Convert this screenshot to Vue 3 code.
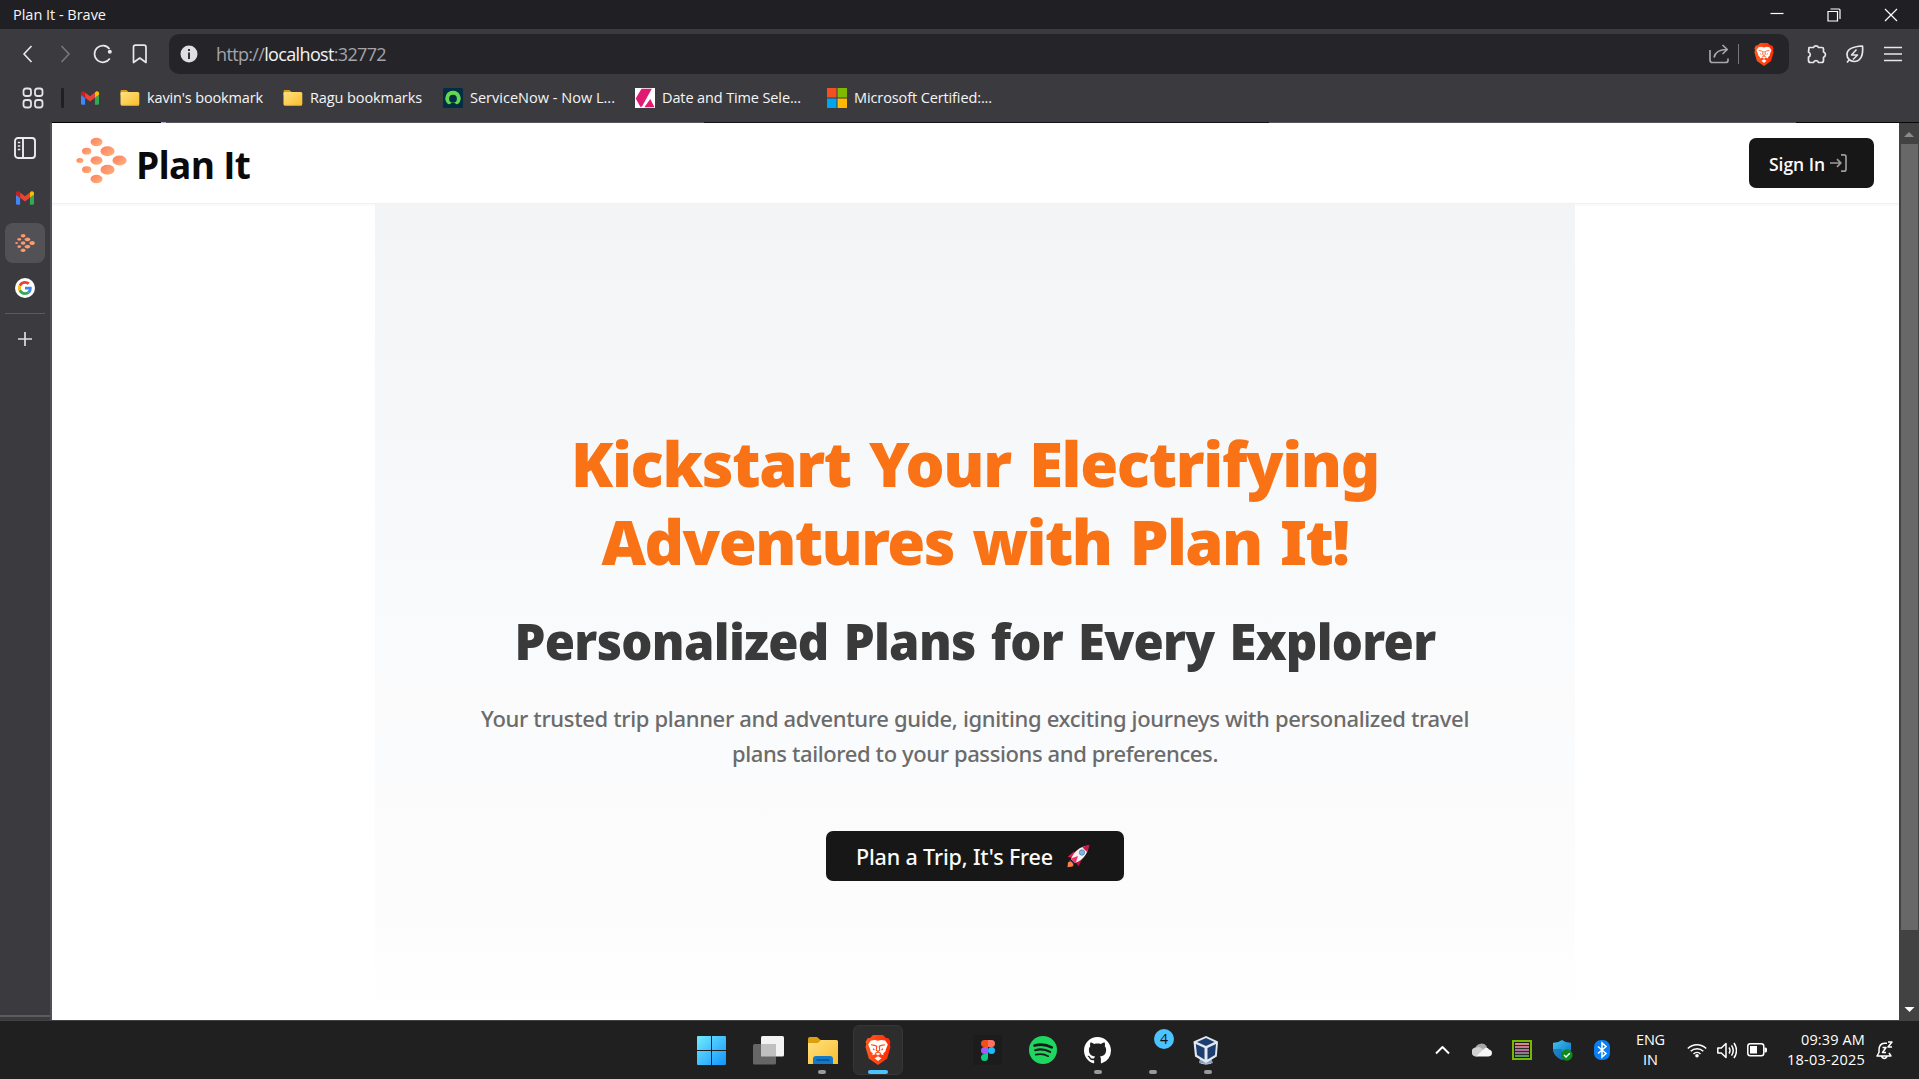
<script setup>
// Spreads the letters of a label so that it takes up the given width.
const vFit = {
  mounted(el, { value }) {
    const n = el.textContent.length
    const w = el.getBoundingClientRect().width
    el.style.letterSpacing = `${(value - w) / n}px`
  },
}

const dots = [
  [96, 142, 6, 4.2], [86.2, 151.2, 4.7, 3.4], [107, 151.2, 7, 5],
  [79.4, 160.5, 3.5, 2.5], [96, 160.5, 6, 4.2], [119, 160.5, 7, 5],
  [86.2, 169.7, 4.7, 3.4], [107, 169.7, 7, 5], [96, 179, 6, 4.2],
]

const bookmarks = [
  { icon: 'i-folder', text: "kavin's bookmark", w: 116, gap: 20 },
  { icon: 'i-folder', text: 'Ragu bookmarks', w: 112, gap: 21 },
  { icon: 'i-now', text: 'ServiceNow - Now L...', w: 145, gap: 20 },
  { icon: 'i-pick', text: 'Date and Time Sele...', w: 139, gap: 26 },
  { icon: 'i-ms', text: 'Microsoft Certified:...', w: 138, gap: 0 },
]
</script>

<template>
  <div class="screen">
    <svg class="defs" width="0" height="0">
      <defs>
        <linearGradient id="gl" x1="0" y1="0" x2="1" y2="1"><stop offset="0" stop-color="#ff7e5f" /><stop offset="1" stop-color="#feb47b" /></linearGradient>
        <linearGradient id="gf" x1="0" y1="0" x2="1" y2="1"><stop offset="0" stop-color="#ffe182" /><stop offset="1" stop-color="#f9bd2b" /></linearGradient>
        <linearGradient id="gw" x1="0" y1="0" x2="29" y2="29" gradientUnits="userSpaceOnUse"><stop offset="0" stop-color="#72ebff" /><stop offset="1" stop-color="#1294fb" /></linearGradient>
        <linearGradient id="gs" x1="0" y1="0" x2="1" y2="1"><stop offset="0" stop-color="#3dc6f2" /><stop offset="1" stop-color="#0c67c0" /></linearGradient>
        <linearGradient id="gb" x1="0" y1="0" x2="1" y2="0"><stop offset="0" stop-color="#ff5a1f" /><stop offset="1" stop-color="#ff2a00" /></linearGradient>
        <linearGradient id="gn" x1="0" y1="0" x2="0" y2="1"><stop offset="0" stop-color="#e0907c" /><stop offset=".5" stop-color="#b76aa4" /><stop offset="1" stop-color="#4f9d6a" /></linearGradient>
      </defs>
      <symbol id="i-gmail" viewBox="52 42 88 66">
        <path fill="#4285f4" d="M58 108h14V74L52 59v43c0 3.32 2.69 6 6 6" /><path fill="#34a853" d="M120 108h14c3.32 0 6-2.69 6-6V59l-20 15" />
        <path fill="#fbbc04" d="M120 48v26l20-15v-8c0-7.42-8.47-11.65-14.4-7.2" /><path fill="#ea4335" d="M72 74V48l24 18 24-18v26L96 92" />
        <path fill="#c5221f" d="M52 51v8l20 15V48l-5.6-4.2c-5.94-4.45-14.4-.22-14.4 7.2" />
      </symbol>
      <symbol id="i-logo" viewBox="75.5 137 51 47">
        <ellipse v-for="(d, i) in dots" :key="i" :cx="d[0]" :cy="d[1]" :rx="d[2]" :ry="d[3]" fill="url(#gl)" />
      </symbol>
      <symbol id="i-brave" viewBox="0 0 26 30">
        <path fill="url(#gb)" d="M8 0h10l3 3 2.500.3L25.500 7l-.8 2 .8 3-3.300 11.500L13 30 3.800 23.500.500 12l.8-3L.500 7l2-3.700L5 3z" />
        <path fill="#fff" d="M13 5.800l3-.9 4.200.6 2.600 4-2 5-.3 1.800-2.300 2.300.4 1.700-3.300-1.200L13 20.500l-2.300-1.400-3.300 1.200.4-1.700-2.300-2.300-.3-1.800-2-5 2.600-4L10 4.900zM13 21.300l3.400 2L13 26l-3.400-2.700z" />
        <path fill="none" stroke="#fb4a13" stroke-width="1.100" d="M6 9.800l3.700.6 1.500.9M20 9.800l-3.700.6-1.500.9M11.800 10.500l-.5 4.700 1.700 1.300 1.700-1.300-.5-4.700M8 13.800l1.500 1.200M18 13.800l-1.500 1.200M10 18.500l3-1.500 3 1.500" />
      </symbol>
      <symbol id="i-folder" viewBox="0 0 20 20"><path fill="#d99c1c" d="M.5 3.500c0-1 .5-1.500 1.500-1.500h4.500l2 2H18v3H.5z" /><rect x=".5" y="4" width="18.800" height="13.600" rx="1.500" fill="url(#gf)" /><path stroke="#e0a01f" d="M1.500 17.400h17" /></symbol>
      <symbol id="i-now" viewBox="0 0 20 20"><rect width="20" height="20" rx="1.500" fill="#032d42" /><path fill="#62d84e" d="M10 2.800a7.500 7.500 0 0 0-5.300 12.900c.6.600 1.400.6 2.100.2a5.700 5.700 0 0 1 6.400 0c.7.400 1.500.4 2.100-.2A7.500 7.500 0 0 0 10 2.800zm0 4a3.900 3.900 0 1 1 0 7.800 3.900 3.900 0 0 1 0-7.800z" /></symbol>
      <symbol id="i-pick" viewBox="0 0 20 20"><path fill="#fff" d="M0 0h20v20H0z" /><path fill="#e01a73" d="M6.500.8h10.300L7 18.500 5.500 19 .7 10.500zM15.300 11l4.200 8.300H9.300z" /></symbol>
      <symbol id="i-ms" viewBox="0 0 20 20"><path fill="#f25022" d="M0 0h9.500v9.500H0z" /><path fill="#7fba00" d="M10.500 0H20v9.500h-9.500z" /><path fill="#00a4ef" d="M0 10.500h9.500V20H0z" /><path fill="#ffb900" d="M10.500 10.500H20V20h-9.500z" /></symbol>
    </svg>

    <header class="titlebar">
      <span v-fit="93" class="t">Plan It - Brave</span>
      <div class="controls">
        <svg width="14" height="14"><path d="M.5 5.500h13" /></svg>
        <svg width="14" height="14"><path d="M1 3.500h9.500v9.500H1zM3.500 1h8.500q1 0 1 1v9" /></svg>
        <svg width="14" height="14"><path d="M1 1l12 12M13 1L1 13" /></svg>
      </div>
    </header>

    <div class="toolbar">
      <svg class="back" width="12" height="18"><path d="M9.500 1L2 9l7.500 8" /></svg>
      <svg class="fwd" width="12" height="18"><path d="M1.500 1L9 9l-7.500 8" /></svg>
      <svg class="reload" width="20" height="20"><path d="M16.800 14.500A8.300 8.300 0 1 1 16.500 5" /><circle cx="16.800" cy="7.700" r="2" fill="#e8e8ea" stroke="none" /></svg>
      <svg class="mark" width="16" height="20"><path d="M1.500 3.200q0-2 2-2h8.500q2 0 2 2v15.300L7.800 14 1.500 18.500z" /></svg>
      <div class="address">
        <svg width="18" height="18"><circle cx="9" cy="9" r="8.500" fill="#dedee4" /><path fill="#333338" d="M8 4h2v2H8zM8 7.500h2V14H8z" /></svg>
        <span v-fit="170" class="url">http://<b>localhost</b>:32772</span>
        <svg class="share" width="20" height="20"><path d="M1 6v10q0 2.500 2.500 2.500h13Q19 18.500 19 16.500v-2M5 13.500C6 8.500 10 5.500 18 5.500M13.500 1l4.800 4.500-4.800 4.500" /></svg>
        <i class="sep"></i>
        <svg class="lion" width="20" height="23"><use href="#i-brave" /></svg>
      </div>
      <div class="exts">
        <svg width="20" height="20"><path d="M2 3.500h4.500a2.700 2.700 0 0 1 5 0h3.500q1.500 0 1.500 1.500v3a2.700 2.700 0 0 1 0 5.200v3.300q0 2-2 2h-3a2.600 2.600 0 0 0-5 0H3.500q-2 0-2-2V13a2.500 2.500 0 0 0 0-4.800z" /></svg>
        <svg width="20" height="20"><path d="M17.500 2c.8 8-1 15.500-8.500 15.500A7 7 0 0 1 2 10.500C2 5 8 2.500 17.500 2zM2 18.500l2.500-3" /><path class="thin" d="M11.500 5.500L6.500 11h6L8 15.500" /></svg>
        <svg width="20" height="20"><path d="M1 3.500h18M1 10h18M1 16.500h18" /></svg>
      </div>
    </div>

    <nav class="bookmarks">
      <svg class="apps" width="22" height="22"><path d="M4 1.500h2.500Q9 1.500 9 4v2.500Q9 9 6.500 9H4Q1.500 9 1.500 6.500V4Q1.500 1.500 4 1.500zM15.500 1.500H18q2.500 0 2.500 2.500v2.500Q20.500 9 18 9h-2.500Q13 9 13 6.500V4q0-2.500 2.500-2.500zM4 13h2.500Q9 13 9 15.500V18q0 2.500-2.500 2.500H4Q1.500 20.500 1.500 18v-2.500Q1.500 13 4 13zM15.500 13H18q2.500 0 2.500 2.500V18q0 2.500-2.500 2.500h-2.500Q13 20.500 13 18v-2.500q0-2.500 2.500-2.500z" /></svg>
      <i class="bar"></i>
      <svg class="gm" width="18" height="14"><use href="#i-gmail" /></svg>
      <a v-for="b in bookmarks" :key="b.text" :style="{ marginRight: b.gap + 'px' }">
        <svg width="20" height="20"><use :href="'#' + b.icon" /></svg>
        <span v-fit="b.w" class="t">{{ b.text }}</span>
      </a>
    </nav>
    <div class="seam"></div>

    <main class="middle">
      <aside class="tabs">
        <svg class="panel" width="22" height="22"><rect x="1" y="1" width="20" height="20" rx="3" /><path d="M9 1v20" /><path class="thin" d="M3.800 5.500h2.500M3.800 9h2.500M3.800 12.500h2.500" /></svg>
        <svg class="gm2" width="18" height="14"><use href="#i-gmail" /></svg>
        <div class="active"><svg width="20" height="20"><use href="#i-logo" /></svg></div>
        <div class="goog">
          <svg width="14" height="14" viewBox="0 0 48 48"><path fill="#EA4335" d="M24 9.500c3.540 0 6.710 1.220 9.210 3.600l6.850-6.850C35.900 2.380 30.470 0 24 0 14.620 0 6.510 5.380 2.560 13.220l7.980 6.190C12.430 13.720 17.740 9.500 24 9.500z" /><path fill="#4285F4" d="M46.980 24.550c0-1.570-.15-3.090-.38-4.550H24v9.020h12.940c-.58 2.960-2.260 5.480-4.780 7.180l7.730 6c4.510-4.180 7.090-10.360 7.090-17.650z" /><path fill="#FBBC05" d="M10.530 28.590c-.48-1.450-.76-2.990-.76-4.590s.27-3.140.76-4.590l-7.980-6.190C.92 16.460 0 20.120 0 24c0 3.880.92 7.540 2.560 10.780l7.970-6.190z" /><path fill="#34A853" d="M24 48c6.480 0 11.930-2.130 15.890-5.810l-7.730-6c-2.150 1.450-4.920 2.300-8.160 2.300-6.260 0-11.570-4.220-13.470-9.910l-7.980 6.190C6.510 42.620 14.620 48 24 48z" /></svg>
        </div>
        <i class="rule"></i>
        <svg class="plus" width="14" height="14"><path d="M7 0v14M0 7h14" /></svg>
        <i class="foot"></i>
      </aside>

      <section class="page">
        <div class="nav">
          <svg class="logo" width="51" height="47"><use href="#i-logo" /></svg>
          <span v-fit="114" class="brand">Plan It</span>
          <button class="signin"><span v-fit="56">Sign In</span>
            <svg width="20" height="20" viewBox="0 0 20 20"><path d="M2 10h10.500M9 6.200L12.800 10 9 13.800M13 1.800h3q2 0 2 2v12.400q0 2-2 2h-3" /></svg>
          </button>
        </div>
        <div class="hero">
          <h1><span v-fit="808">Kickstart Your Electrifying</span><span v-fit="747">Adventures with Plan It!</span></h1>
          <h2><span v-fit="921">Personalized Plans for Every Explorer</span></h2>
          <p><span v-fit="988">Your trusted trip planner and adventure guide, igniting exciting journeys with personalized travel</span><span v-fit="486">plans tailored to your passions and preferences.</span></p>
          <button class="cta"><span v-fit="197">Plan a Trip, It's Free</span>
            <svg width="24" height="24" viewBox="0 0 24 24">
              <path fill="#be1240" d="M3 12l6-4 7 7-3.500 7.500-2.500-4-6-6z" /><path fill="#dd1f4f" d="M1.500 13L8 7.500l3 5-5 1z" />
              <path fill="#f4f1f5" d="M5 15C8 7 14 2.500 22.500 1.500 22 10 17 16 9 19z" /><path fill="#c91846" d="M16.500 3.500Q20 1 23.500.8 23.300 4 21 8z" />
              <path fill="#f8315c" d="M12 12l-7 2.500 4.500 5z" /><path fill="#533566" d="M4 15.500L8.500 20l-1.500 1-4-4z" />
              <path fill="#ff8045" d="M2 18.500q2-2 4 0t.5 4l-5 .7z" /><circle cx="16" cy="8.500" r="2.700" fill="#74b9ee" stroke="#667a96" stroke-width=".8" />
            </svg>
          </button>
        </div>
      </section>

      <div class="scroll">
        <svg width="20" height="20"><path fill="#8b8b8b" d="M5 14h10l-5-5z" /></svg>
        <i></i>
        <svg class="down" width="20" height="20"><path fill="#fff" d="M5.500 8h10l-5 5z" /></svg>
      </div>
    </main>

    <footer class="taskbar">
      <div class="apps-row">
        <div class="app"><svg width="29" height="29"><path fill="url(#gw)" d="M1 0h13v14H0V1q0-1 1-1zM15 0h13q1 0 1 1v13H15zM0 15h14v14H1q-1 0-1-1zM15 15h14v13q0 1-1 1H15z" /></svg></div>
        <div class="app"><svg class="view" width="31" height="29"><rect x="8" y="0" width="23" height="20.500" rx="1.500" fill="#f3f3f3" /><rect x="0" y="8" width="23" height="20.500" rx="1.500" fill="#666" /><path fill="#c0c0c0" d="M8 8h15v12.500H8z" /></svg></div>
        <div class="app run"><svg class="files" width="30" height="27"><path fill="#dca00d" d="M0 2q0-2 2-2h7l3.500 3H28v6H0z" /><path fill="url(#gf)" d="M0 6h10l3-3h15.500Q30 3 30 4.500V27H0z" /><path fill="#1379c9" d="M5 27v-5q0-3 3-3h14q3 0 3 3v5z" /><path stroke="#0a4a8e" stroke-width="1.400" d="M8.500 23h13" /></svg></div>
        <div class="app on"><svg width="26" height="30"><use href="#i-brave" /></svg></div>
        <div class="app"></div>
        <div class="app"><div class="figma"><svg width="14" height="21" viewBox="0 0 14 21"><path fill="#f24e1e" d="M7 0H3.500a3.500 3.500 0 0 0 0 7H7z" /><path fill="#ff7262" d="M7 0h3.500a3.500 3.500 0 0 1 0 7H7z" /><path fill="#a259ff" d="M7 7H3.500a3.500 3.500 0 0 0 0 7H7z" /><circle cx="10.500" cy="10.500" r="3.500" fill="#1abcfe" /><path fill="#0acf83" d="M7 14H3.500A3.500 3.500 0 1 0 7 17.500z" /></svg></div></div>
        <div class="app"><svg width="28" height="28" viewBox="0 0 24 24"><circle cx="12" cy="12" r="12" fill="#1ed760" /><path fill="none" stroke="#181c19" stroke-linecap="round" stroke-width="2.300" d="M4.800 8.200q7.700-2.200 14.700 1.500" /><path fill="none" stroke="#181c19" stroke-linecap="round" stroke-width="1.900" d="M5.300 12.200q6.700-1.900 12.800 1.400" /><path fill="none" stroke="#181c19" stroke-linecap="round" stroke-width="1.500" d="M5.800 16q5.700-1.400 10.700 1.300" /></svg></div>
        <div class="app run"><svg width="27" height="27" viewBox="0 0 16 16"><path fill="#fff" d="M8 0C3.580 0 0 3.580 0 8c0 3.540 2.290 6.530 5.470 7.590.4.070.55-.17.55-.38 0-.19-.01-.82-.01-1.490-2.010.37-2.530-.49-2.690-.94-.09-.23-.48-.94-.82-1.130-.28-.15-.68-.52-.01-.53.63-.01 1.080.58 1.230.82.72 1.210 1.870.87 2.330.66.070-.52.28-.87.51-1.070-1.780-.2-3.640-.89-3.640-3.950 0-.87.31-1.590.82-2.150-.08-.2-.36-1.020.08-2.120 0 0 .67-.21 2.200.82.64-.18 1.320-.27 2-.27s1.360.09 2 .27c1.530-1.040 2.200-.82 2.200-.82.44 1.100.16 1.920.08 2.120.51.56.82 1.270.82 2.150 0 3.070-1.870 3.750-3.650 3.950.29.25.54.73.54 1.480 0 1.070-.01 1.930-.01 2.200 0 .21.15.46.55.38A8.010 8.010 0 0 0 16 8c0-4.420-3.580-8-8-8z" /></svg></div>
        <div class="app run"><span class="badge">4</span></div>
        <div class="app run"><svg class="vbox" width="26" height="29"><path fill="#8c9cb5" d="M7 22h11l2 5-7 2-7-2z" /><path fill="#e3e9f2" d="M13 0l12 5.500-1.200 15L13 27 2 20.500.500 5.500z" /><path fill="#1d3f70" d="M13 2l8.500 4L13 10 4 6zM2.800 8l8.700 4v11.500L4 19zM23 8l-8.500 4v11.500L22 19z" /><path stroke="#a9b7cb" d="M8 27.500h10" /></svg></div>
      </div>
      <div class="tray">
        <svg class="up" width="15" height="10"><path d="M1 8.500l6.500-6.500L14 8.500" /></svg>
        <svg class="cloud" width="20" height="14"><path fill="#a7a7a7" d="M3 6.500A6.500 6.500 0 0 1 14.500 3l1 4z" /><path fill="#d0d0d0" d="M4 4.500q3.500-1.500 6 1l4 3-9 5H4a4.200 4.200 0 0 1 0-9z" /><path fill="#f5f5f5" d="M4 13.500l9-8.500q3-1 4 1.500 3 .5 3 3.500t-3.500 3.500z" /></svg>
        <svg class="nv" width="20" height="20"><rect x="1" y="1" width="18" height="18" fill="#1b1b1b" stroke="#76b900" stroke-width="2" /><rect x="3" y="3" width="14" height="14" fill="url(#gn)" /><path stroke="#263322" stroke-width="1" d="M3 5.500h14M3 8.500h14M3 11.500h14M3 14.500h14" /></svg>
        <svg class="shield" width="20" height="21"><path fill="url(#gs)" d="M9 0q4 3 9 2.700V9q0 7-9 11Q0 16 0 9V2.700Q5 3 9 0z" /><path fill="#0b5dae" opacity=".5" d="M0 9h9v11Q1 16 0 9z" /><circle cx="13.800" cy="15" r="5.800" fill="#0c8a1c" /><path fill="none" stroke="#fff" stroke-width="1.500" d="M11 15l2 2 3.800-3.800" /></svg>
        <svg class="bt" width="16" height="20"><rect width="16" height="20" rx="7" fill="#0a7ff5" /><path fill="none" stroke="#fff" stroke-width="1.500" d="M4 6.500l8 7L8 17V3l4 3.500-8 7" /></svg>
        <div class="lang"><span v-fit="29">ENG</span><span v-fit="15">IN</span></div>
        <svg class="wifi" width="20" height="16"><path d="M.8 6.500a13 13 0 0 1 18.400 0M3.700 9.300a9 9 0 0 1 12.600 0M6.500 12a5 5 0 0 1 7 0" /><circle cx="10" cy="13.800" r="1.800" fill="#fff" stroke="none" /></svg>
        <svg class="vol" width="20" height="17"><path d="M.8 6h3.500L9 1.500v14L4.300 11H.8zM12 5.500q2 3 0 6M14.500 3.300q3.500 5.200 0 10.400M17 1q5 7.500 0 15" /></svg>
        <svg class="bat" width="20" height="14"><rect x=".8" y=".8" width="16" height="12" rx="2.500" /><path fill="#fff" stroke="none" d="M3 3h7v7.600H3zM17.500 4.500h1q1.500 0 1.500 1.500v2q0 1.500-1.500 1.500h-1z" /></svg>
        <div class="clock"><span v-fit="64">09:39 AM</span><span v-fit="78">18-03-2025</span></div>
        <svg class="bell" width="18" height="19"><path d="M11 2.200H8.500Q3 2.500 3 9v2.500L1 15h14l-2-3M5.500 15.500Q8.500 19.500 11 15.500M6.500 6.500H10l-3.500 5H10M12 1h4l-4 5h4" /></svg>
      </div>
    </footer>
  </div>
</template>

<style>
body { margin: 0; background: #fff; }
</style>

<style scoped>
* { box-sizing: border-box; }
.screen { width: 1919px; height: 1079px; display: flex; flex-direction: column; overflow: hidden; font-family: "Open Sans", "Noto Sans", sans-serif; background: #3b3b3f; }
.defs { position: absolute; }
svg { display: block; flex: none; }
span { white-space: nowrap; }
i { display: block; flex: none; }
.t { font-size: 14.5px; color: #f5f5f6; line-height: 20px; }

.titlebar { height: 29px; background: #202024; display: flex; align-items: center; justify-content: space-between; padding: 0 21px 0 13px; }
.controls { display: flex; gap: 43px; }
.controls svg { fill: none; stroke: #fff; stroke-width: 1.200; }

.toolbar { height: 50px; padding: 0 15px 0 22px; display: flex; align-items: center; }
.toolbar > svg, .exts svg, .share { fill: none; stroke: #e8e8ea; stroke-width: 1.700; stroke-linejoin: round; }
.back { margin-right: 26px; }
.toolbar .fwd { stroke: #77777b; margin-right: 21px; }
.reload { margin-right: 19px; }
.mark { margin-right: 21px; }
.address { width: 1620px; height: 40px; border-radius: 10px; background: #252529; display: flex; align-items: center; padding: 0 15px 0 11px; }
.url { margin-left: 18px; font-size: 18px; color: #a4a4aa; line-height: 24px; }
.url b { font-weight: 400; color: #f2f2f4; }
.share { margin-left: auto; }
.address .share { stroke: #a5a5aa; }
.sep { width: 1px; height: 20px; background: #77777b; margin: 0 15px 0 9px; }
.exts { margin-left: 18px; display: flex; gap: 18px; }
.exts .thin { stroke-width: 1.500; }

.bookmarks { height: 43px; display: flex; align-items: center; padding: 0 0 5px 22px; }
.apps { fill: none; stroke: #e4e4e6; stroke-width: 1.800; margin-right: 17px; }
.bar { width: 3px; height: 20px; background: #202024; border-radius: 1px; margin-right: 17px; }
.gm { margin-right: 21px; }
.bookmarks a { display: flex; align-items: center; gap: 7px; }
.seam { height: 1px; background: linear-gradient(90deg, #3b3b3f 52px, #050508 52px 161px, #a9a4e0 161px 166px, #55555b 166px 704px, #15101a 704px 1269px, #55555b 1269px 1796px, #08080a 1796px); }

.middle { flex: 1; display: flex; min-height: 0; }
.tabs { width: 52px; border-right: 2px solid #515155; display: flex; flex-direction: column; align-items: center; padding: 14px 0 0; }
.panel { fill: none; stroke: #ececee; stroke-width: 1.900; }
.panel .thin { stroke-width: 1.400; }
.gm2 { margin: 32px 0 18px; }
.active { width: 40px; height: 40px; border-radius: 8px; background: #525256; display: flex; align-items: center; justify-content: center; }
.goog { width: 20px; height: 20px; border-radius: 50%; background: #fff; display: flex; align-items: center; justify-content: center; margin: 15px 0; }
.rule { width: 40px; height: 1px; background: #5b5b5f; }
.plus { margin-top: 18px; fill: none; stroke: #dededf; stroke-width: 1.700; }
.foot { margin-top: auto; margin-bottom: 3px; width: 50px; height: 2px; background: #5b5b60; }

.page { width: 1847px; background: #fff; }
.nav { height: 81px; border-bottom: 1px solid #f1f1f2; box-shadow: 0 1px 2px rgba(0,0,0,.04); display: flex; align-items: flex-start; padding: 15px 25px 0 24px; }
.logo { margin-top: -1px; }
.brand { margin: 5px 0 0 9px; font-size: 37px; line-height: 44px; font-weight: 700; color: #0a0a0a; }
button { border: 0; background: #171717; color: #fafafa; font-family: inherit; border-radius: 7px; height: 50px; display: flex; align-items: center; }
.signin { margin-left: auto; width: 125px; padding: 2px 0 0 20px; font-size: 17.500px; font-weight: 600; }
.signin svg { margin: -3px 0 0 3px; fill: none; stroke: #9a9a9a; stroke-width: 1.700; }
.hero { width: 1200px; height: 817px; margin: 0 0 0 323px; background: linear-gradient(#f3f4f6, #f9fafb 47%, #fcfcfd 85%, #fff); display: flex; flex-direction: column; align-items: center; padding-top: 220px; }
h1, h2, p { margin: 0; display: flex; flex-direction: column; align-items: center; }
h1, h2 { font-family: "Noto Sans", "Open Sans", sans-serif; font-weight: 900; word-spacing: .06em; }
h1 { font-size: 61.500px; line-height: 78px; color: #f97316; }
h2 { margin-top: 31px; font-size: 49px; line-height: 60px; color: #3a3a3a; }
p { margin-top: 30px; font-family: "Noto Sans", "Open Sans", sans-serif; font-size: 22px; line-height: 35px; font-weight: 500; color: #6b6b6b; }
.cta { margin-top: 60px; width: 298px; padding: 0 0 0 30px; font-family: "Noto Sans", "Open Sans", sans-serif; font-size: 21.500px; font-weight: 500; }
.cta svg { margin-left: 13px; }

.scroll { width: 20px; background: #424242; display: flex; flex-direction: column; }
.scroll i { width: 17px; height: 786px; margin: 1px 0 0 2px; background: #686868; }
.scroll .down { margin-top: auto; margin-bottom: 1px; }

.taskbar { height: 59px; background: #202020; border-top: 1px solid #404243; display: flex; justify-content: space-between; padding: 0 25px 0 684px; }
.apps-row { display: flex; }
.app { width: 55px; height: 50px; margin-top: 4px; display: flex; align-items: center; justify-content: center; position: relative; }
.view { margin-left: 3px; }
.files { margin-left: 2px; }
.on { width: 50px; margin: 4px 2px 0 4px; background: #2d2d2d; border: 1px solid #363636; border-radius: 6px; }
.run::after, .on::after { content: ""; position: absolute; bottom: 1px; left: 24px; width: 8px; height: 4px; border-radius: 2px; background: #999; }
.on::after { left: 14px; bottom: 0; width: 20px; background: #4cc2ff; }
.figma { width: 29px; height: 30px; background: #1c1c1c; display: flex; align-items: center; justify-content: center; }
.badge { position: absolute; left: 29px; top: 4px; width: 20px; height: 20px; border-radius: 50%; background: #4cc2ff; color: #111; font-size: 14px; line-height: 20px; text-align: center; }
.vbox { margin-right: 4px; }
.tray { display: flex; align-items: center; }
.tray > * { flex: none; }
.up, .wifi, .vol, .bat, .bell { fill: none; stroke: #fff; stroke-width: 1.500; stroke-linejoin: round; }
.up { stroke-width: 2; margin-right: 22px; }
.cloud { margin-right: 20px; }
.nv { margin-right: 21px; }
.shield { margin-right: 21px; }
.bt { margin-right: 26px; }
.lang, .clock { display: flex; flex-direction: column; align-items: center; color: #fff; font-size: 14.500px; line-height: 20px; }
.lang { margin-right: 22px; }
.wifi { margin-right: 10px; }
.vol { margin-right: 10px; }
.bat { margin-right: 20px; }
.clock { align-items: flex-end; margin-right: 11px; }
</style>
